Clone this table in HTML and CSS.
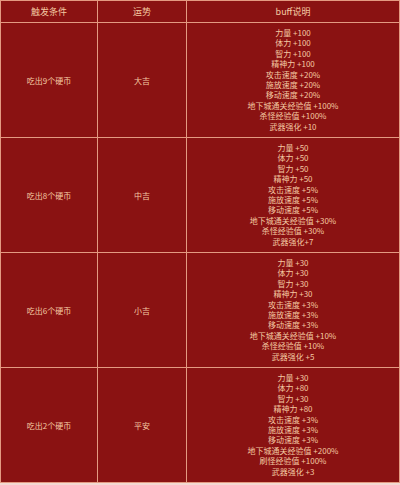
FILE: index.html
```html
<!DOCTYPE html>
<html lang="zh">
<head>
<meta charset="utf-8">
<link rel="stylesheet" href="styles.css">
</head>
<body>
<table class="buff-table">
  <colgroup>
    <col class="c1"><col class="c2"><col class="c3">
  </colgroup>
  <thead>
    <tr class="head"><th>触发条件</th><th>运势</th><th>buff说明</th></tr>
  </thead>
  <tbody>
    <tr class="row">
      <td>吃出9个硬币</td><td>大吉</td>
      <td class="list">力量 +100<br>体力 +100<br>智力 +100<br>精神力 +100<br>攻击速度 +20%<br>施放速度 +20%<br>移动速度 +20%<br>地下城通关经验值 +100%<br>杀怪经验值 +100%<br>武器强化 +10</td>
    </tr>
    <tr class="row">
      <td>吃出8个硬币</td><td>中吉</td>
      <td class="list">力量 +50<br>体力 +50<br>智力 +50<br>精神力 +50<br>攻击速度 +5%<br>施放速度 +5%<br>移动速度 +5%<br>地下城通关经验值 +30%<br>杀怪经验值 +30%<br>武器强化+7</td>
    </tr>
    <tr class="row">
      <td>吃出6个硬币</td><td>小吉</td>
      <td class="list">力量 +30<br>体力 +30<br>智力 +30<br>精神力 +30<br>攻击速度 +3%<br>施放速度 +3%<br>移动速度 +3%<br>地下城通关经验值 +10%<br>杀怪经验值 +10%<br>武器强化 +5</td>
    </tr>
    <tr class="row">
      <td>吃出2个硬币</td><td>平安</td>
      <td class="list">力量 +30<br>体力 +80<br>智力 +30<br>精神力 +80<br>攻击速度 +3%<br>施放速度 +3%<br>移动速度 +3%<br>地下城通关经验值 +200%<br>刷怪经验值 +100%<br>武器强化 +3</td>
    </tr>
  </tbody>
</table>
</body>
</html>
```
FILE: styles.css
```css
html, body {
  margin: 0;
  padding: 0;
  background: #f3d9d2;
}
body {
  width: 400px;
  height: 485px;
  overflow: hidden;
}
.buff-table {
  width: 399px;
  border-collapse: collapse;
  table-layout: fixed;
  background: #8a1212;
  color: #f4c9a2;
  font-family: "Noto Sans CJK SC", "Noto Sans", sans-serif;
  font-size: 8px;
}
.c1 { width: 97px; }
.c2 { width: 89px; }
.c3 { width: 213px; }
.buff-table th,
.buff-table td {
  border: 1px solid #e49a82;
  text-align: center;
  vertical-align: middle;
  padding: 0;
  font-weight: normal;
}
.buff-table th {
  font-size: 9px;
  height: 21px;
}
.row td {
  height: 114px;
}
.list {
  line-height: 10.45px;
}
```
